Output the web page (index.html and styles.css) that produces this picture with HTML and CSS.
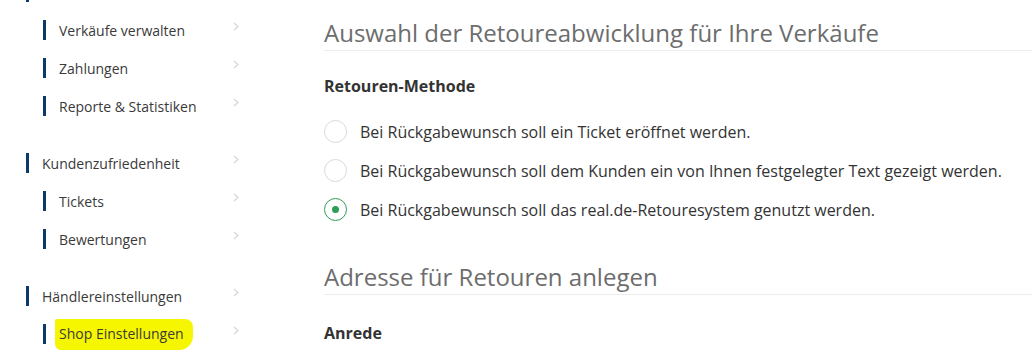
FILE: index.html
```html
<!DOCTYPE html>
<html>
<head>
	<meta charset="UTF-8">
	<meta name="viewport" content="width=device-width, initial-scale=1">
	<title>Retouren - Shop Einstellungen</title>
	<link rel="stylesheet" href="styles.css">
</head>
<body>

	<nav class="sidebar">
		<ul class="nav-group">
			<!-- group title scrolled out of view, only its bar shows -->
			<li class="nav-item"><span class="nav-label"></span></li>
			<li class="nav-item sub">
				<span class="nav-label">Verkäufe verwalten</span>
				<svg class="chevron" width="6" height="9" viewBox="0 0 6 9"><polyline points="1,1 5,4.5 1,8"/></svg>
			</li>
			<li class="nav-item sub">
				<span class="nav-label">Zahlungen</span>
				<svg class="chevron" width="6" height="9" viewBox="0 0 6 9"><polyline points="1,1 5,4.5 1,8"/></svg>
			</li>
			<li class="nav-item sub">
				<span class="nav-label">Reporte &amp; Statistiken</span>
				<svg class="chevron" width="6" height="9" viewBox="0 0 6 9"><polyline points="1,1 5,4.5 1,8"/></svg>
			</li>
		</ul>

		<ul class="nav-group">
			<li class="nav-item">
				<span class="nav-label">Kundenzufriedenheit</span>
				<svg class="chevron" width="6" height="9" viewBox="0 0 6 9"><polyline points="1,1 5,4.5 1,8"/></svg>
			</li>
			<li class="nav-item sub">
				<span class="nav-label">Tickets</span>
				<svg class="chevron" width="6" height="9" viewBox="0 0 6 9"><polyline points="1,1 5,4.5 1,8"/></svg>
			</li>
			<li class="nav-item sub">
				<span class="nav-label">Bewertungen</span>
				<svg class="chevron" width="6" height="9" viewBox="0 0 6 9"><polyline points="1,1 5,4.5 1,8"/></svg>
			</li>
		</ul>

		<ul class="nav-group">
			<li class="nav-item">
				<span class="nav-label">Händlereinstellungen</span>
				<svg class="chevron" width="6" height="9" viewBox="0 0 6 9"><polyline points="1,1 5,4.5 1,8"/></svg>
			</li>
			<li class="nav-item sub">
				<span class="nav-label"><span class="marker">Shop Einstellungen</span></span>
				<svg class="chevron" width="6" height="9" viewBox="0 0 6 9"><polyline points="1,1 5,4.5 1,8"/></svg>
			</li>
		</ul>
	</nav>

	<main class="content">
		<h2 class="section-title">Auswahl der Retoureabwicklung für Ihre Verkäufe</h2>

		<div class="field-label first">Retouren-Methode</div>
		<div class="radio-list">
			<label class="radio-row">
				<span class="radio"></span>
				<span>Bei Rückgabewunsch soll ein Ticket eröffnet werden.</span>
			</label>
			<label class="radio-row">
				<span class="radio"></span>
				<span>Bei Rückgabewunsch soll dem Kunden ein von Ihnen festgelegter Text gezeigt werden.</span>
			</label>
			<label class="radio-row">
				<span class="radio checked"></span>
				<span>Bei Rückgabewunsch soll das real.de-Retouresystem genutzt werden.</span>
			</label>
		</div>

		<h2 class="section-title second">Adresse für Retouren anlegen</h2>

		<div class="field-label">Anrede</div>
	</main>

</body>
</html>
```

FILE: styles.css
```css
:root {
	--col-text: #333;
	--col-nav: #3a3a3a;
	--col-title: #6d6d6d;
	--col-bar: #0b3b6b;
	--col-line: #ececec;
	--col-chevron: #d6d6d6;
	--col-green: #2f9c58;
	--col-marker: #f6f600;
}
body {
	margin: 0;
	padding: 0;
	overflow: hidden;
	display: flex;
	font-family: "Open Sans", "DejaVu Sans", sans-serif;
	color: var(--col-text);
	background: #fff;
}

/* sidebar */
.sidebar {
	width: 300px;
	flex: none;
	box-sizing: border-box;
	padding: 0 60px 0 26px;
	margin-top: -27px;
}
.nav-group {
	list-style: none;
	margin: 0;
	padding: 0;
}
.nav-group + .nav-group {
	margin-top: 19px;
}
.nav-item {
	height: 38px;
	display: flex;
	align-items: center;
	justify-content: space-between;
	font-size: 14px;
	color: var(--col-nav);
}
.nav-item.sub {
	padding-left: 17px;
}
.nav-label {
	display: flex;
	align-items: center;
	height: 20px;
	border-left: 3px solid var(--col-bar);
	padding-left: 13px;
	white-space: nowrap;
}
.marker {
	background: var(--col-marker);
	padding: 5px 9px 7px 4px;
	margin-left: -4px;
	border-radius: 2px 8px 14px 6px;
}
.chevron {
	margin-top: -7px;
	margin-right: 1px;
}
.chevron polyline {
	fill: none;
	stroke: var(--col-chevron);
	stroke-width: 1.2;
}

/* content */
.content {
	flex: 1;
	padding-left: 24px;
	min-width: 0;
}
.section-title {
	margin: 16px 0 0;
	font-size: 24px;
	font-weight: 400;
	line-height: 33px;
	color: var(--col-title);
	padding-bottom: 1px;
	border-bottom: 1px solid var(--col-line);
	white-space: nowrap;
}
.section-title.second {
	margin-top: 31px;
}
.field-label {
	font-size: 16px;
	font-weight: 700;
	line-height: 20px;
	margin-top: 28px;
}
.field-label.first {
	margin-top: 25px;
}
.radio-list {
	margin-top: 16px;
}
.radio-row {
	height: 39px;
	display: flex;
	align-items: center;
	gap: 13px;
	font-size: 16px;
	line-height: 20px;
	white-space: nowrap;
}
.radio {
	width: 23px;
	height: 23px;
	box-sizing: border-box;
	border: 1px solid #d9d9d9;
	border-radius: 50%;
	flex: none;
	display: flex;
	align-items: center;
	justify-content: center;
}
.radio.checked {
	border-color: var(--col-green);
}
.radio.checked::after {
	content: "";
	width: 7px;
	height: 7px;
	border-radius: 50%;
	background: var(--col-green);
}
```
